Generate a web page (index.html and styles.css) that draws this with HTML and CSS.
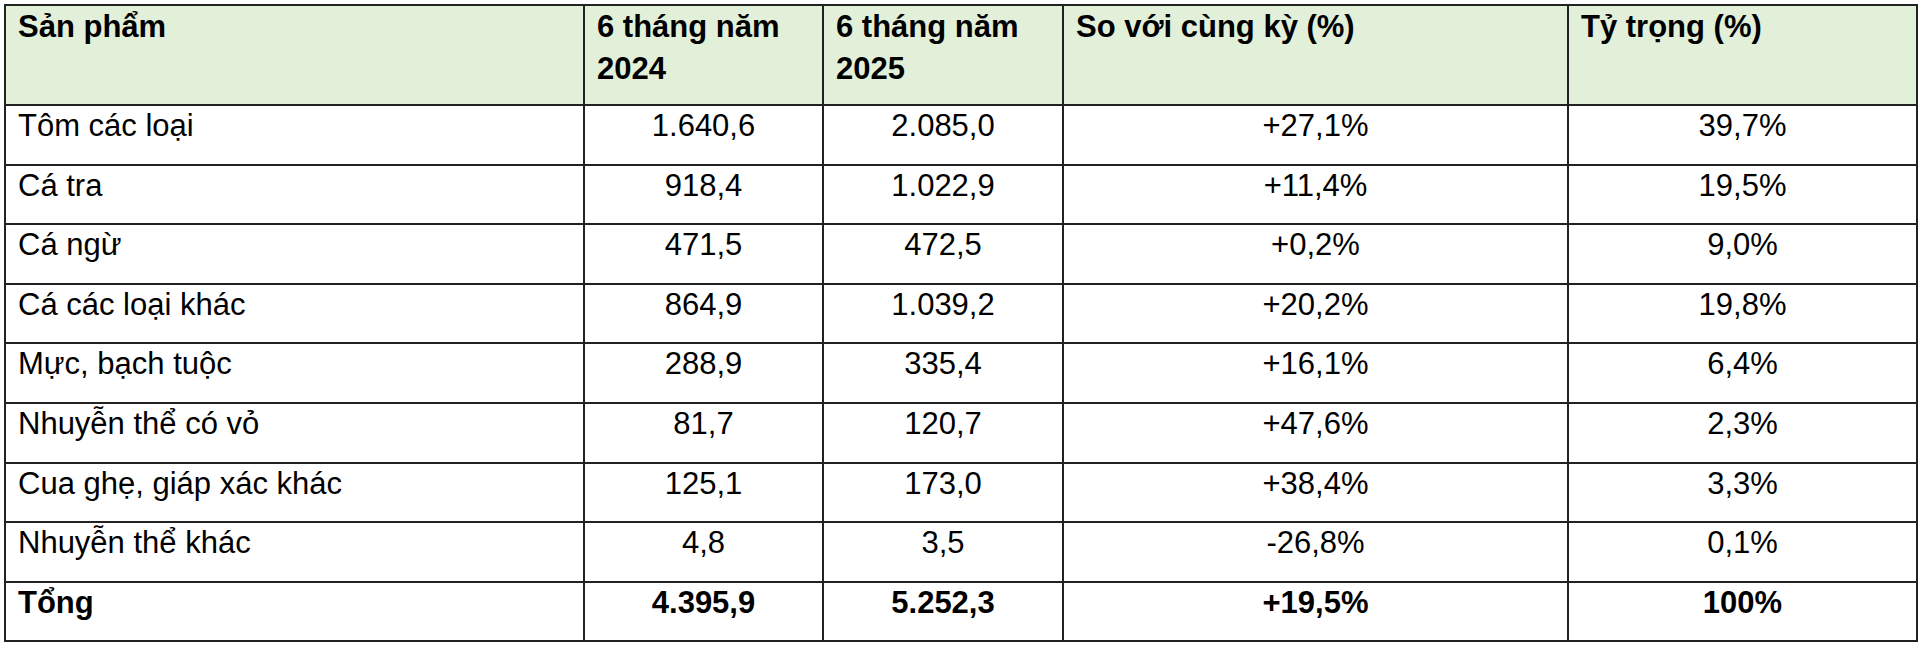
FILE: index.html
```html
<!DOCTYPE html>
<html lang="vi">
<head>
<meta charset="utf-8">
<title>Xuất khẩu thủy sản 6 tháng</title>
<link rel="stylesheet" href="styles.css">
</head>
<body>
<div class="page">
  <table class="data-table">
    <colgroup>
      <col class="c-name">
      <col class="c-y24">
      <col class="c-y25">
      <col class="c-cmp">
      <col class="c-share">
    </colgroup>
    <thead>
      <tr class="head-row">
        <th>Sản phẩm</th>
        <th>6 tháng năm 2024</th>
        <th>6 tháng năm 2025</th>
        <th>So với cùng kỳ (%)</th>
        <th>Tỷ trọng (%)</th>
      </tr>
    </thead>
    <tbody>
      <tr><td class="name">Tôm các loại</td><td>1.640,6</td><td>2.085,0</td><td>+27,1%</td><td>39,7%</td></tr>
      <tr><td class="name">Cá tra</td><td>918,4</td><td>1.022,9</td><td>+11,4%</td><td>19,5%</td></tr>
      <tr><td class="name">Cá ngừ</td><td>471,5</td><td>472,5</td><td>+0,2%</td><td>9,0%</td></tr>
      <tr><td class="name">Cá các loại khác</td><td>864,9</td><td>1.039,2</td><td>+20,2%</td><td>19,8%</td></tr>
      <tr><td class="name">Mực, bạch tuộc</td><td>288,9</td><td>335,4</td><td>+16,1%</td><td>6,4%</td></tr>
      <tr><td class="name">Nhuyễn thể có vỏ</td><td>81,7</td><td>120,7</td><td>+47,6%</td><td>2,3%</td></tr>
      <tr><td class="name">Cua ghẹ, giáp xác khác</td><td>125,1</td><td>173,0</td><td>+38,4%</td><td>3,3%</td></tr>
      <tr><td class="name">Nhuyễn thể khác</td><td>4,8</td><td>3,5</td><td>-26,8%</td><td>0,1%</td></tr>
      <tr class="total-row"><td class="name">Tổng</td><td>4.395,9</td><td>5.252,3</td><td>+19,5%</td><td>100%</td></tr>
    </tbody>
  </table>
</div>
</body>
</html>
```

FILE: styles.css
```css
html, body {
  margin: 0;
  padding: 0;
  background: #ffffff;
}

.page {
  padding: 4px 0 0 4px;
}

.data-table {
  width: 1912px;
  table-layout: fixed;
  border-collapse: collapse;
  font-family: "Liberation Sans", Arial, sans-serif;
  font-size: 31px;
  color: #000000;
}

.c-name { width: 579px; }
.c-y24 { width: 239px; }
.c-y25 { width: 240px; }
.c-cmp { width: 505px; }
.c-share { width: 349px; }

.data-table th,
.data-table td {
  border: 2px solid #222222;
  padding: 0 12px;
  vertical-align: top;
}

.data-table th {
  background: #e2efd9;
  font-weight: bold;
  text-align: left;
  line-height: 42px;
}

.head-row {
  height: 100px;
}

.data-table tbody tr {
  height: 59.6px;
}

.data-table td {
  text-align: center;
  line-height: 40px;
}

.data-table td.name {
  text-align: left;
}

.total-row td {
  font-weight: bold;
}
```
